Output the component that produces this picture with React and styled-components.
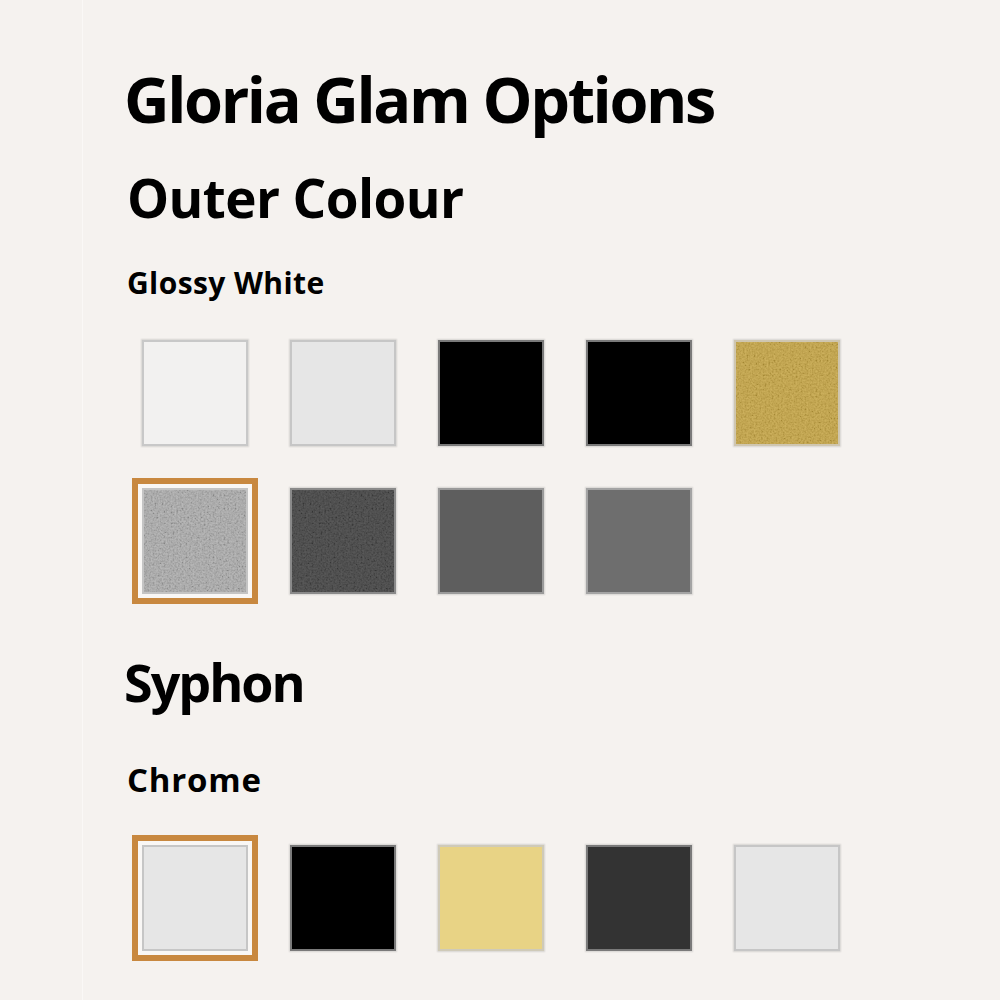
import React from "react";
import styled, { createGlobalStyle } from "styled-components";

const Global = createGlobalStyle`
  html, body { margin: 0; padding: 0; background: #f5f2ef; }
  body { font-family: "Open Sans", "Noto Sans", sans-serif; color: #000; }
`;

const Page = styled.div`
  display: flex;
  width: 1000px;
  min-height: 1000px;
  background: #f5f2ef;
  overflow: hidden;
`;

const Gutter = styled.div`
  width: 82px;
  flex: none;
  border-right: 1px solid #faf8f6;
`;

const Content = styled.main`
  display: flex;
  flex-direction: column;
  align-items: flex-start;
  padding-left: 41px;
  padding-top: 67px;
`;

const Title = styled.h1`
  margin: 0;
  font-size: 63px;
  line-height: 1;
  font-weight: 700;
  letter-spacing: -2.4px;
`;

const SectionTitle = styled.h2`
  margin: ${(p) => p.$mt}px 0 0 ${(p) => p.$ml || 0}px;
  font-size: ${(p) => p.$size}px;
  line-height: 1;
  font-weight: 700;
  letter-spacing: ${(p) => p.$ls}px;
`;

const Label = styled.h3`
  margin: ${(p) => p.$mt}px 0 0 3px;
  font-size: ${(p) => p.$size}px;
  line-height: 1;
  font-weight: 700;
  letter-spacing: ${(p) => p.$ls}px;
`;

const Grid = styled.div`
  display: grid;
  grid-template-columns: repeat(5, 106px);
  grid-auto-rows: 106px;
  gap: 42px;
  margin: ${(p) => p.$mt}px 0 0 18px;
`;

const Swatch = styled.button`
  position: relative;
  box-sizing: border-box;
  width: 106px;
  height: 106px;
  padding: 0;
  border: 2px solid ${(p) => p.$edge};
  background: ${(p) => p.$color};
  cursor: pointer;
  overflow: hidden;
  outline: ${(p) => (p.$selected ? "6px solid #c8883f" : "none")};
  outline-offset: 4px;
  box-shadow: ${(p) =>
    p.$selected
      ? "0 0 0 4px #f9f7f5, 0 0 1.5px 1px rgba(0,0,0,0.12)"
      : "0 0 1.5px 1px rgba(0,0,0,0.12)"};
  svg {
    position: absolute;
    inset: 0;
    width: 100%;
    height: 100%;
    display: block;
  }
`;

const Noise = ({ id, opacity }) => (
  <svg aria-hidden="true">
    <filter id={id} x="0" y="0" width="100%" height="100%">
      <feTurbulence type="fractalNoise" baseFrequency="0.55" numOctaves="2" seed="7" />
      <feColorMatrix type="saturate" values="0" />
      <feComponentTransfer>
        <feFuncR type="linear" slope="2.2" intercept="-0.6" />
        <feFuncG type="linear" slope="2.2" intercept="-0.6" />
        <feFuncB type="linear" slope="2.2" intercept="-0.6" />
        <feFuncA type="linear" slope="0" intercept="1" />
      </feComponentTransfer>
    </filter>
    <rect width="100%" height="100%" filter={`url(#${id})`} opacity={opacity} />
  </svg>
);

const outer = [
  { color: "#f2f1f0", edge: "#c8c8c8" },
  { color: "#e6e6e6", edge: "#c6c6c6" },
  { color: "#000000", edge: "#7a7a7a" },
  { color: "#000000", edge: "#7a7a7a" },
  { color: "#c4a23e", edge: "#cfc6b0", noise: 0.16 },
  { color: "#a8a8a8", edge: "#c4c4c4", noise: 0.2, selected: true },
  { color: "#3e3e3e", edge: "#8a8a8a", noise: 0.14 },
  { color: "#5e5e5e", edge: "#9a9a9a" },
  { color: "#6e6e6e", edge: "#a4a4a4" },
];

const syphon = [
  { color: "#e6e6e6", edge: "#c6c6c6", selected: true },
  { color: "#000000", edge: "#7a7a7a" },
  { color: "#e8d385", edge: "#cfcab8" },
  { color: "#333333", edge: "#7a7a7a" },
  { color: "#e6e6e6", edge: "#c6c6c6" },
];

const SwatchGrid = ({ items, mt, name }) => (
  <Grid $mt={mt}>
    {items.map((s, i) => (
      <Swatch
        key={i}
        $color={s.color}
        $edge={s.edge}
        $selected={s.selected}
        aria-label={`${name} ${i + 1}`}
      >
        {s.noise ? <Noise id={`${name}-n${i}`} opacity={s.noise} /> : null}
      </Swatch>
    ))}
  </Grid>
);

export default function App() {
  return (
    <Page>
      <Global />
      <Gutter />
      <Content>
        <Title>Gloria Glam Options</Title>
        <SectionTitle $mt={41} $size={53} $ml={3} $ls={-0.6}>Outer Colour</SectionTitle>
        <Label $mt={44} $size={30} $ls={0.4}>Glossy White</Label>
        <SwatchGrid items={outer} mt={42} name="outer" />
        <SectionTitle $mt={62} $size={52} $ml={0} $ls={-2}>Syphon</SectionTitle>
        <Label $mt={55} $size={33} $ls={0.8}>Chrome</Label>
        <SwatchGrid items={syphon} mt={49} name="syphon" />
      </Content>
    </Page>
  );
}
